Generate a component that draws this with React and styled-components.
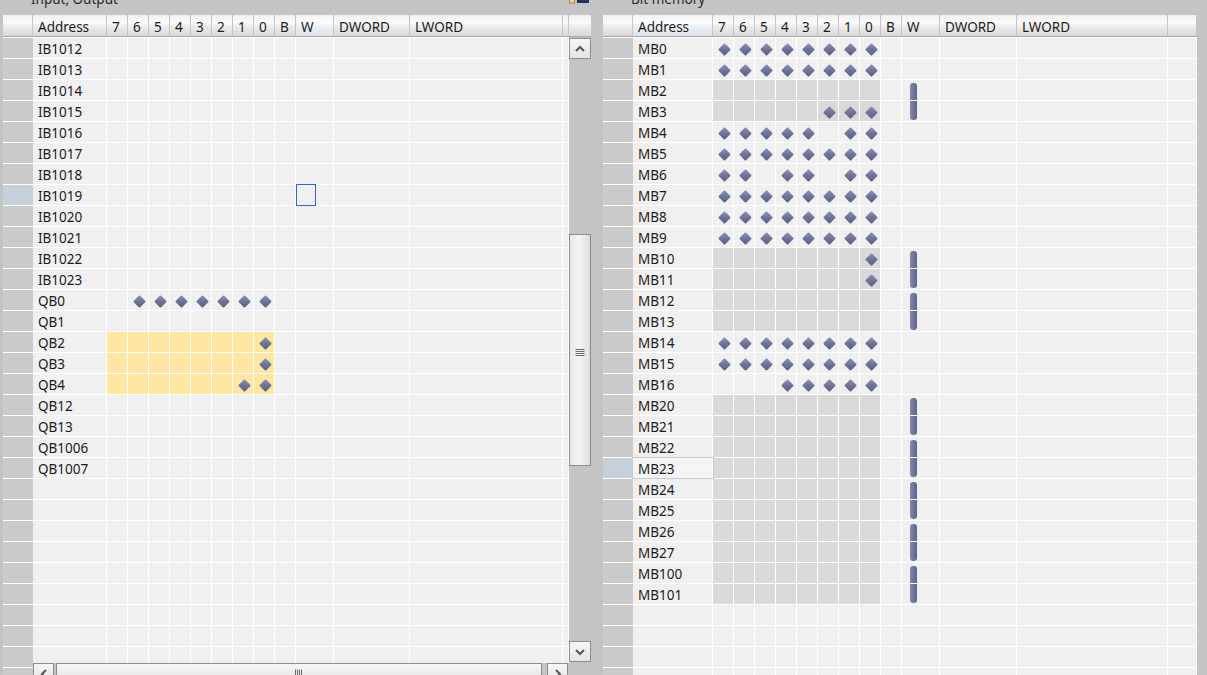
import React from "react"
import styled, { createGlobalStyle, css } from "styled-components"

const GlobalStyle = createGlobalStyle`
  html, body { margin: 0; padding: 0; }
  body {
    background: #c4c4c4;
    font-family: "Noto Sans", "Liberation Sans", sans-serif;
  }
  * { box-sizing: border-box; }
`

const Page = styled.div`
  display: flex;
  gap: 12px;
  width: 1207px;
  height: 675px;
  padding-left: 3px;
  overflow: hidden;
  background: #c4c4c4;
`

const Panel = styled.div`
  display: flex;
  flex-direction: column;
  width: ${p => p.$w}px;
  height: 675px;
  flex: none;
`

const Title = styled.div`
  height: 15px;
  flex: none;
  display: flex;
  justify-content: space-between;
  align-items: flex-start;
  padding-left: 28px;
  overflow: hidden;
`

const TitleText = styled.span`
  margin-top: -10px;
  line-height: 18px;
  font-size: 13.5px;
  color: #2a2a2a;
  white-space: nowrap;
`

const TitleIcon = styled.svg`
  margin-right: 2px;
  flex: none;
`

const Body = styled.div`
  display: flex;
  flex: 1;
  min-height: 0;
`

const TableCol = styled.div`
  display: flex;
  flex-direction: column;
  width: ${p => p.$w}px;
  flex: none;
  min-height: 0;
`

const Header = styled.div`
  display: flex;
  height: 22px;
  flex: none;
  border-bottom: 1px solid #a8a8a8;
  background: linear-gradient(to bottom, #f1f1f1 0%, #fbfbfb 35%, #e9e9e9 60%, #d9d9d9 100%);
`

const HeadCell = styled.div`
  flex: none;
  width: ${p => p.$w}px;
  height: 100%;
  border-right: 1px solid #c6c6c6;
  padding: 2px 0 0 5px;
  display: flex;
  align-items: center;
  font-size: 13.5px;
  color: #1b1b1b;
  white-space: nowrap;
  ${p => p.$hl && css`
    background: linear-gradient(to bottom, #f3f6f9 0%, #fbfcfd 35%, #e9eef3 60%, #dde3e9 100%);
  `}
`

const Rows = styled.div`
  display: flex;
  flex-direction: column;
  flex: 1;
  min-height: 0;
  overflow: hidden;
`

const Row = styled.div`
  display: flex;
  flex: none;
  height: 21px;
  border-top: 1px solid #fff;
  background: #f0f0f0;
`

const RowHead = styled.div`
  flex: none;
  width: 30px;
  height: 100%;
  background: ${p => (p.$sel ? "#c5d0db" : "#cbcbcb")};
`

const Cell = styled.div`
  flex: none;
  width: ${p => p.$w}px;
  height: 100%;
  border-right: 1px solid #fff;
  display: flex;
  align-items: center;
  background: ${p => p.$bg || "transparent"};
`

const AddrCell = styled(Cell)`
  padding: 2px 0 0 5px;
  font-size: 13.5px;
  color: #1b1b1b;
  white-space: nowrap;
  ${p => p.$sel && css`
    position: relative;
    z-index: 1;
    outline: 1px solid #c3ccd6;
    background: #f5f5f5;
  `}
`

const BitCell = styled(Cell)`
  justify-content: center;
  padding: 3px 0 0 3px;
`

const Diamond = styled.span`
  width: 9px;
  height: 9px;
  border-radius: 1px;
  transform: rotate(45deg);
  background: linear-gradient(135deg, #8e94b6 0%, #6d7399 50%, #5b6185 100%);
`

const WCell = styled(Cell)`
  align-items: stretch;
  padding-left: 8px;
  position: relative;
  z-index: ${p => (p.$front ? 2 : "auto")};
`

const WBar = styled.span`
  width: 7px;
  background: linear-gradient(90deg, #858baf 0%, #6c7298 60%, #5d6388 100%);
  ${p => (p.$part === "top"
    ? css`margin-top: 3px; border-radius: 3px 3px 0 0;`
    : css`margin-bottom: 1px; border-radius: 0 0 3px 3px;`)}
`

const FocusBox = styled.span`
  width: 20px;
  height: 22px;
  margin: -1px 0 0 -8px;
  border: 1px solid #2f64cc;
  flex: none;
`

const BottomBar = styled.div`
  display: flex;
  height: 12px;
  flex: none;
  overflow: hidden;
`

const RowHeadStub = styled.div`
  width: 30px;
  flex: none;
  background: linear-gradient(to bottom, #cbcbcb 4px, #fff 4px, #fff 5px, #cbcbcb 5px);
`

const HScroll = styled.div`
  display: flex;
  align-items: flex-start;
  width: 536px;
  flex: none;
  padding-right: 1px;
`

const ScrollBtn = styled.div`
  width: ${p => p.$w || 22}px;
  height: 21px;
  flex: none;
  border: 1px solid #8d8d8d;
  background: linear-gradient(to bottom, #f6f6f6, #e4e4e4);
  display: flex;
  align-items: center;
  justify-content: center;
  margin-top: ${p => p.$mt || 0}px;
  margin-left: ${p => p.$ml || 0}px;
`

const HThumb = styled.div`
  width: ${p => p.$w}px;
  height: 21px;
  flex: none;
  margin-left: ${p => p.$ml}px;
  border: 1px solid #8d8d8d;
  background: linear-gradient(to bottom, #f6f6f6, #e2e2e2);
  display: flex;
  align-items: center;
  justify-content: center;
`

const VScroll = styled.div`
  display: flex;
  flex-direction: column;
  width: 22px;
  flex: none;
`

const ScrollCorner = styled.div`
  height: 22px;
  flex: none;
  border-bottom: 1px solid #a8a8a8;
  background: linear-gradient(to bottom, #f1f1f1 0%, #fbfbfb 35%, #e9e9e9 60%, #d9d9d9 100%);
`

const VThumb = styled.div`
  height: 232px;
  flex: none;
  margin-top: 175px;
  border: 1px solid #8d8d8d;
  background: linear-gradient(90deg, #e6e6e6 0%, #f5f5f5 45%, #dedede 100%);
  display: flex;
  align-items: center;
  justify-content: center;
  padding-top: 6px;
`

const Chevron = ({ dir }) => {
  const pts = {
    up: "1,6 5,2 9,6",
    down: "1,2 5,6 9,2",
    left: "6,1 2,5 6,9",
    right: "2,1 6,5 2,9",
  }[dir]
  const vertical = dir === "up" || dir === "down"
  return (
    <svg width={vertical ? 10 : 8} height={vertical ? 8 : 10} viewBox={vertical ? "0 0 10 8" : "0 0 8 10"}>
      <polyline points={pts} fill="none" stroke="#555" strokeWidth="2" />
    </svg>
  )
}

const GripH = () => (
  <svg width="10" height="8" viewBox="0 0 10 8">
    {[0.5, 2.5, 4.5, 6.5].map(y => (
      <line key={y} x1="0.5" x2="9.5" y1={y} y2={y} stroke="#6b6b6b" strokeWidth="1" />
    ))}
  </svg>
)

const GripV = () => (
  <svg width="8" height="10" viewBox="0 0 8 10">
    {[0.5, 2.5, 4.5, 6.5].map(x => (
      <line key={x} y1="0.5" y2="9.5" x1={x} x2={x} stroke="#6b6b6b" strokeWidth="1" />
    ))}
  </svg>
)

const BIT_HEADS = ["7", "6", "5", "4", "3", "2", "1", "0"]

const leftCols = { addr: 74, bit: 21, b: 21, w: 38, dword: 76, lword: 153, extra: 6 }
const rightCols = { addr: 80, bit: 21, b: 21, w: 38, dword: 77, lword: 151, extra: 29 }

const ib = ["IB1012", "IB1013", "IB1014", "IB1015", "IB1016", "IB1017", "IB1018", "IB1019", "IB1020", "IB1021", "IB1022", "IB1023"]

const leftRows = [
  ...ib.map(a => ({ a, sel: a === "IB1019", focus: a === "IB1019" })),
  { a: "QB0", bits: "01111111" },
  { a: "QB1" },
  { a: "QB2", bits: "00000001", force: true },
  { a: "QB3", bits: "00000001", force: true },
  { a: "QB4", bits: "00000011", force: true },
  { a: "QB12" },
  { a: "QB13" },
  { a: "QB1006" },
  { a: "QB1007" },
]

const ALL = "11111111"
const rightRows = [
  { a: "MB0", bits: ALL },
  { a: "MB1", bits: ALL },
  { a: "MB2", gray: true, w: "top" },
  { a: "MB3", bits: "00000111", gray: true, w: "bottom" },
  { a: "MB4", bits: "11111011" },
  { a: "MB5", bits: ALL },
  { a: "MB6", bits: "11011011" },
  { a: "MB7", bits: ALL },
  { a: "MB8", bits: ALL },
  { a: "MB9", bits: ALL },
  { a: "MB10", bits: "00000001", gray: true, w: "top" },
  { a: "MB11", bits: "00000001", gray: true, w: "bottom" },
  { a: "MB12", gray: true, w: "top" },
  { a: "MB13", gray: true, w: "bottom" },
  { a: "MB14", bits: ALL },
  { a: "MB15", bits: ALL },
  { a: "MB16", bits: "00011111" },
  { a: "MB20", gray: true, w: "top" },
  { a: "MB21", gray: true, w: "bottom" },
  { a: "MB22", gray: true, w: "top" },
  { a: "MB23", gray: true, w: "bottom", sel: true },
  { a: "MB24", gray: true, w: "top" },
  { a: "MB25", gray: true, w: "bottom" },
  { a: "MB26", gray: true, w: "top" },
  { a: "MB27", gray: true, w: "bottom" },
  { a: "MB100", gray: true, w: "top" },
  { a: "MB101", gray: true, w: "bottom" },
]

const TableHeader = ({ cols, hlAddr, hlW }) => (
  <Header>
    <HeadCell $w={30} />
    <HeadCell $w={cols.addr} $hl={hlAddr}>Address</HeadCell>
    {BIT_HEADS.map(h => (
      <HeadCell key={h} $w={cols.bit}>{h}</HeadCell>
    ))}
    <HeadCell $w={cols.b}>B</HeadCell>
    <HeadCell $w={cols.w} $hl={hlW}>W</HeadCell>
    <HeadCell $w={cols.dword}>DWORD</HeadCell>
    <HeadCell $w={cols.lword}>LWORD</HeadCell>
    <HeadCell $w={cols.extra} />
  </Header>
)

const DataRow = ({ cols, row = {} }) => {
  const bits = row.bits || "00000000"
  const bitBg = row.force ? "#ffe6a1" : row.gray ? "#d9d9d9" : null
  return (
    <Row>
      <RowHead $sel={row.sel} />
      <AddrCell $w={cols.addr} $sel={row.sel && !row.focus}>{row.a}</AddrCell>
      {bits.split("").map((b, i) => (
        <BitCell key={i} $w={cols.bit} $bg={bitBg}>
          {b === "1" && <Diamond />}
        </BitCell>
      ))}
      <Cell $w={cols.b} />
      <WCell $w={cols.w} $front={row.focus}>
        {row.w && <WBar $part={row.w} />}
        {row.focus && <FocusBox />}
      </WCell>
      <Cell $w={cols.dword} />
      <Cell $w={cols.lword} />
      <Cell $w={cols.extra} />
    </Row>
  )
}

const fill = (rows, count) => Array.from({ length: count }, (_, i) => rows[i] || {})

export default function App() {
  return (
    <>
      <GlobalStyle />
      <Page>
        <Panel $w={588}>
          <Title>
            <TitleText>Input, Output</TitleText>
            <TitleIcon width="20" height="4" viewBox="0 0 20 4">
              <rect x="0.5" y="-1" width="5" height="4" fill="#f1d57a" stroke="#9a8a55" strokeWidth="1" />
              <rect x="8" y="-1" width="12" height="4" fill="#23306b" />
            </TitleIcon>
          </Title>
          <Body>
            <TableCol $w={566}>
              <TableHeader cols={leftCols} hlW />
              <Rows>
                {fill(leftRows, 30).map((r, i) => (
                  <DataRow key={i} cols={leftCols} row={r} />
                ))}
              </Rows>
              <BottomBar>
                <RowHeadStub />
                <HScroll>
                  <ScrollBtn $w={21}><Chevron dir="left" /></ScrollBtn>
                  <HThumb $w={486} $ml={2}><GripV /></HThumb>
                  <ScrollBtn $w={21} $ml={5}><Chevron dir="right" /></ScrollBtn>
                </HScroll>
              </BottomBar>
            </TableCol>
            <VScroll>
              <ScrollCorner />
              <ScrollBtn $mt={1}><Chevron dir="up" /></ScrollBtn>
              <VThumb><GripH /></VThumb>
              <ScrollBtn $mt={175}><Chevron dir="down" /></ScrollBtn>
            </VScroll>
          </Body>
        </Panel>
        <Panel $w={594}>
          <Title>
            <TitleText>Bit memory</TitleText>
          </Title>
          <TableCol $w={594}>
            <TableHeader cols={rightCols} hlAddr />
            <Rows>
              {fill(rightRows, 31).map((r, i) => (
                <DataRow key={i} cols={rightCols} row={r} />
              ))}
            </Rows>
          </TableCol>
        </Panel>
      </Page>
    </>
  )
}
